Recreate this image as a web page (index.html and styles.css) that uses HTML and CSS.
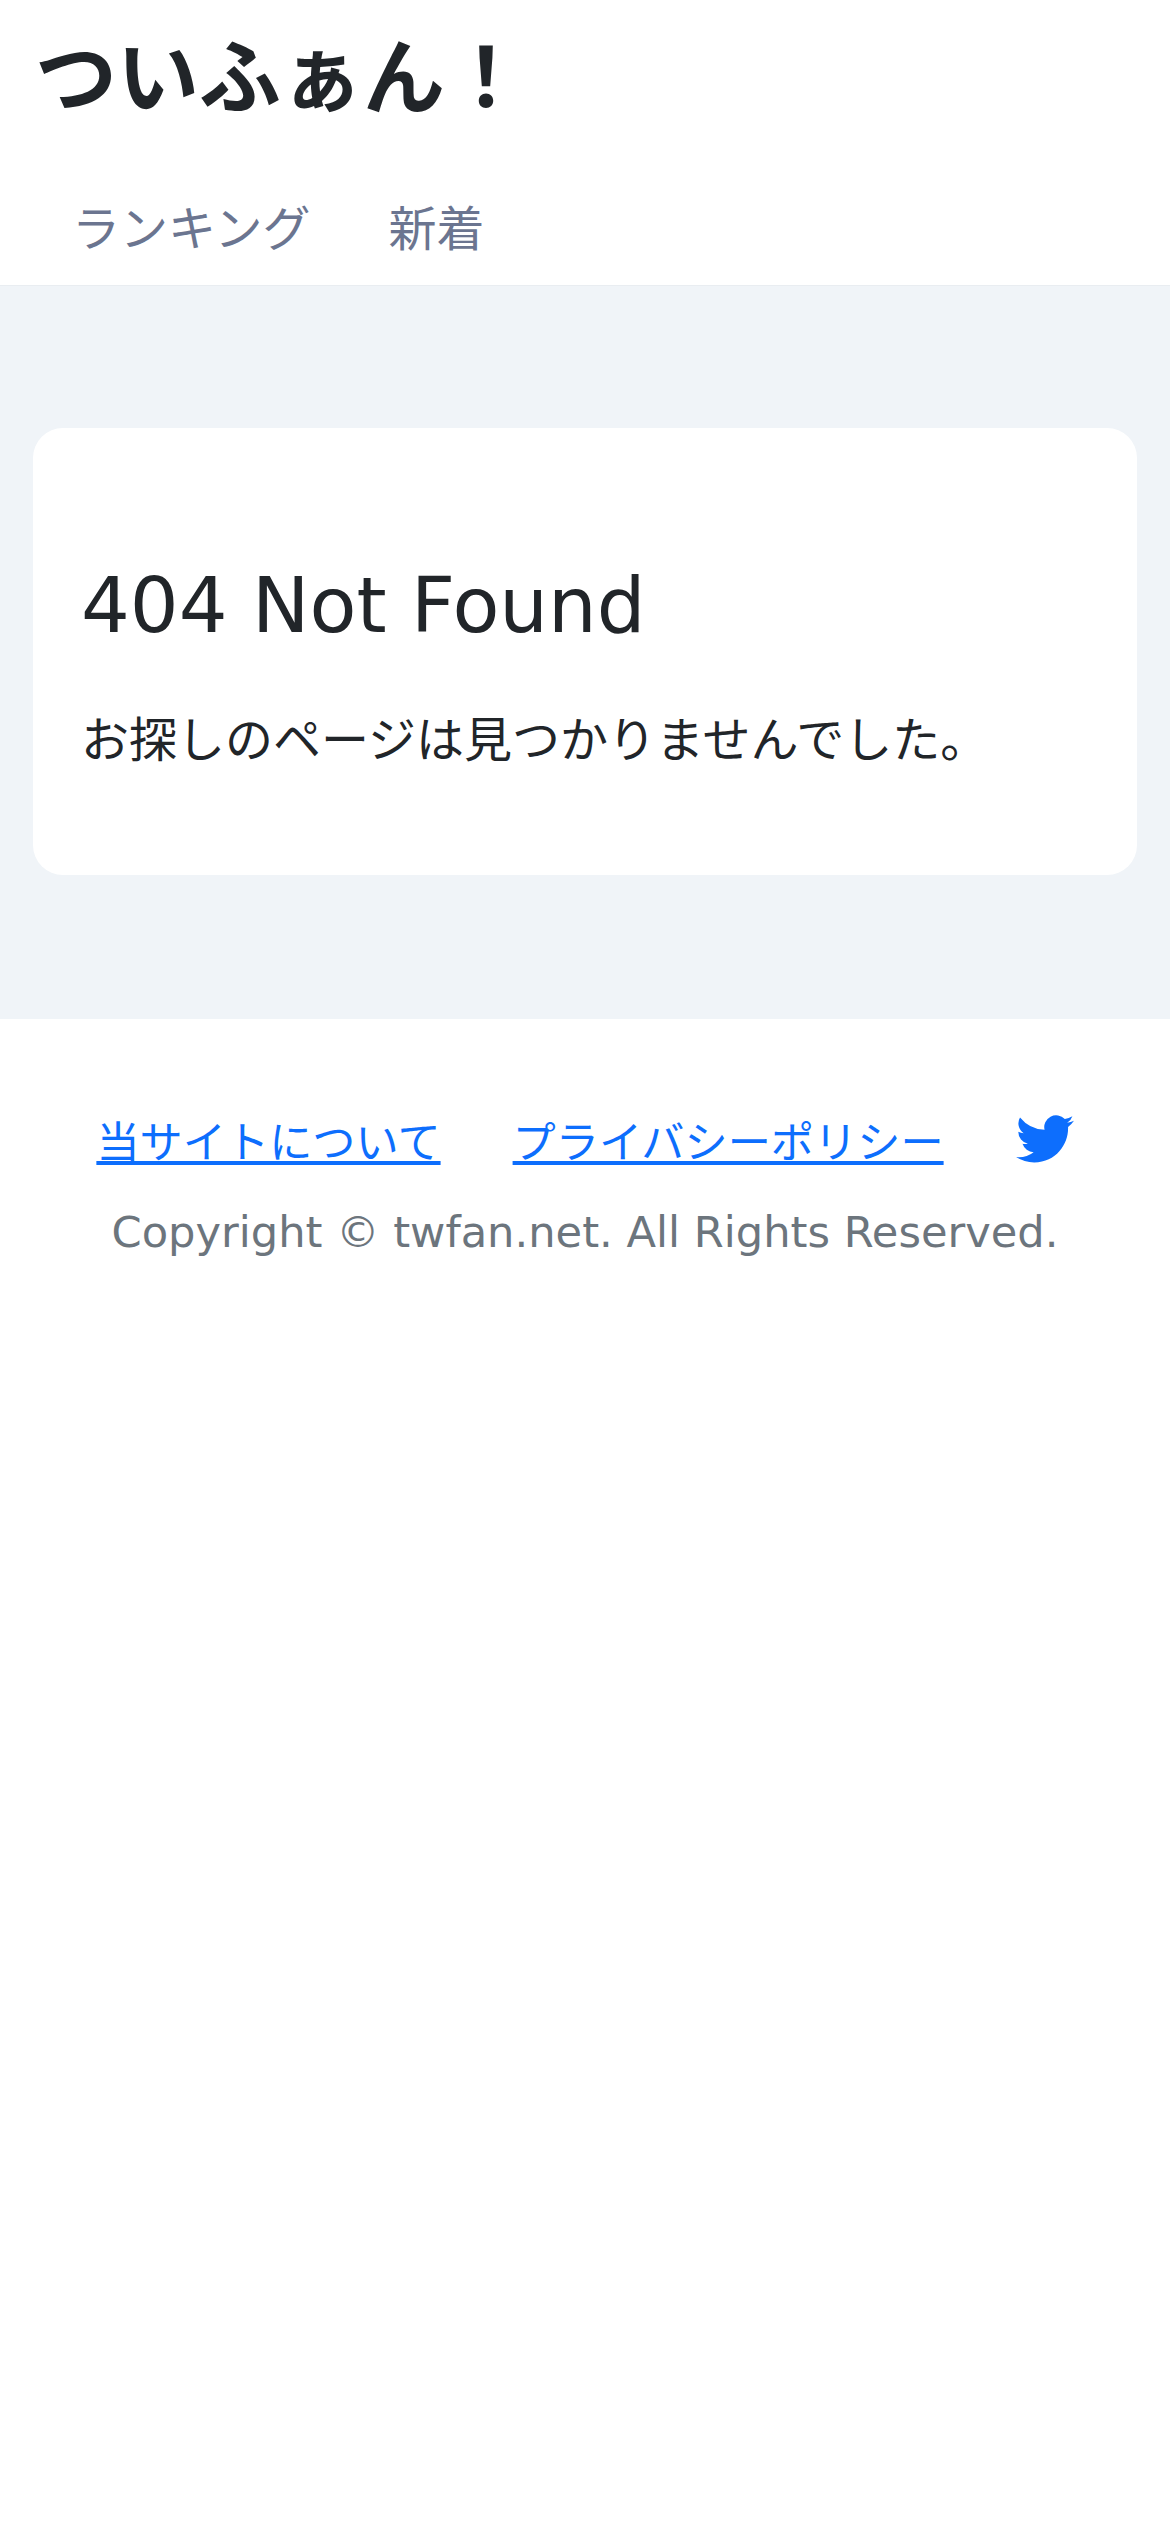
FILE: index.html
```html
<!DOCTYPE html>
<html lang="ja">
<head>
    <meta charset="utf-8" />
    <title>404 Not Found - ついふぁん！</title>
    <link rel="stylesheet" href="styles.css">
</head>
<body>

    <!-- header -->
    <header class="site-header">
        <a class="site-title" href="#">ついふぁん！</a>
        <nav class="site-nav">
            <a href="#">ランキング</a>
            <a href="#">新着</a>
        </nav>
    </header>

    <!-- main -->
    <main class="main-area">
        <div class="error-card">
            <h1>404 Not Found</h1>
            <p>お探しのページは見つかりませんでした。</p>
        </div>
    </main>

    <!-- footer -->
    <footer class="site-footer">
        <div class="footer-links">
            <a href="#">当サイトについて</a>
            <a href="#">プライバシーポリシー</a>
            <a href="#" class="twitter-link" aria-label="Twitter">
                <svg viewBox="0 0 16 16" width="58" height="58" fill="currentColor">
                    <path d="M5.026 15c6.038 0 9.341-5.003 9.341-9.334 0-.14 0-.282-.006-.422A6.685 6.685 0 0 0 16 3.542a6.658 6.658 0 0 1-1.889.518 3.301 3.301 0 0 0 1.447-1.817 6.533 6.533 0 0 1-2.087.793A3.286 3.286 0 0 0 7.875 6.03a9.325 9.325 0 0 1-6.767-3.429 3.289 3.289 0 0 0 1.018 4.382A3.323 3.323 0 0 1 .64 6.575v.045a3.288 3.288 0 0 0 2.632 3.218 3.203 3.203 0 0 1-.865.115 3.23 3.23 0 0 1-.614-.057 3.283 3.283 0 0 0 3.067 2.277A6.588 6.588 0 0 1 .78 13.58a6.32 6.32 0 0 1-.78-.045A9.344 9.344 0 0 0 5.026 15z"/>
                </svg>
            </a>
        </div>
        <p class="copyright">Copyright © twfan.net. All Rights Reserved.</p>
    </footer>

</body>
</html>
```

FILE: styles.css
```css
body {
    margin: 0;
    padding: 0;
    background-color: #ffffff;
    color: #212529;
    font-family: "DejaVu Sans", "Noto Sans CJK JP", sans-serif;
}

a {
    text-decoration: none;
}

.site-header {
    height: 286px;
    box-sizing: border-box;
    padding: 29px 35px 0;
    border-bottom: 1px solid #e9edf1;
}

.site-title {
    display: block;
    color: #212529;
    font-size: 82px;
    font-weight: bold;
    line-height: 100px;
}

.site-nav {
    display: flex;
    gap: 78px;
    margin-top: 64px;
    padding-left: 37px;
}

.site-nav a {
    color: #6b7590;
    font-size: 48px;
    line-height: 72px;
}

.main-area {
    background-color: #f0f4f8;
    padding: 142px 33px 144px;
}

.error-card {
    background-color: #ffffff;
    border-radius: 30px;
    padding: 132px 48px 99px;
}

.error-card h1 {
    margin: 0 0 52px;
    font-size: 76.8px;
    font-weight: 400;
    line-height: 92px;
}

.error-card p {
    margin: 0;
    font-size: 48px;
    line-height: 72px;
}

.site-footer {
    padding: 92px 0 0;
    text-align: center;
}

.footer-links {
    display: flex;
    justify-content: center;
    align-items: center;
    gap: 72px;
    font-size: 43.2px;
    line-height: 64px;
}

.footer-links a {
    color: #0d6efd;
    text-decoration: underline;
}

.footer-links .twitter-link {
    display: flex;
    margin-top: -12px;
    text-decoration: none;
}

.copyright {
    margin: 25px 0 0;
    color: #6c757d;
    font-size: 43.2px;
    line-height: 64px;
}
```
